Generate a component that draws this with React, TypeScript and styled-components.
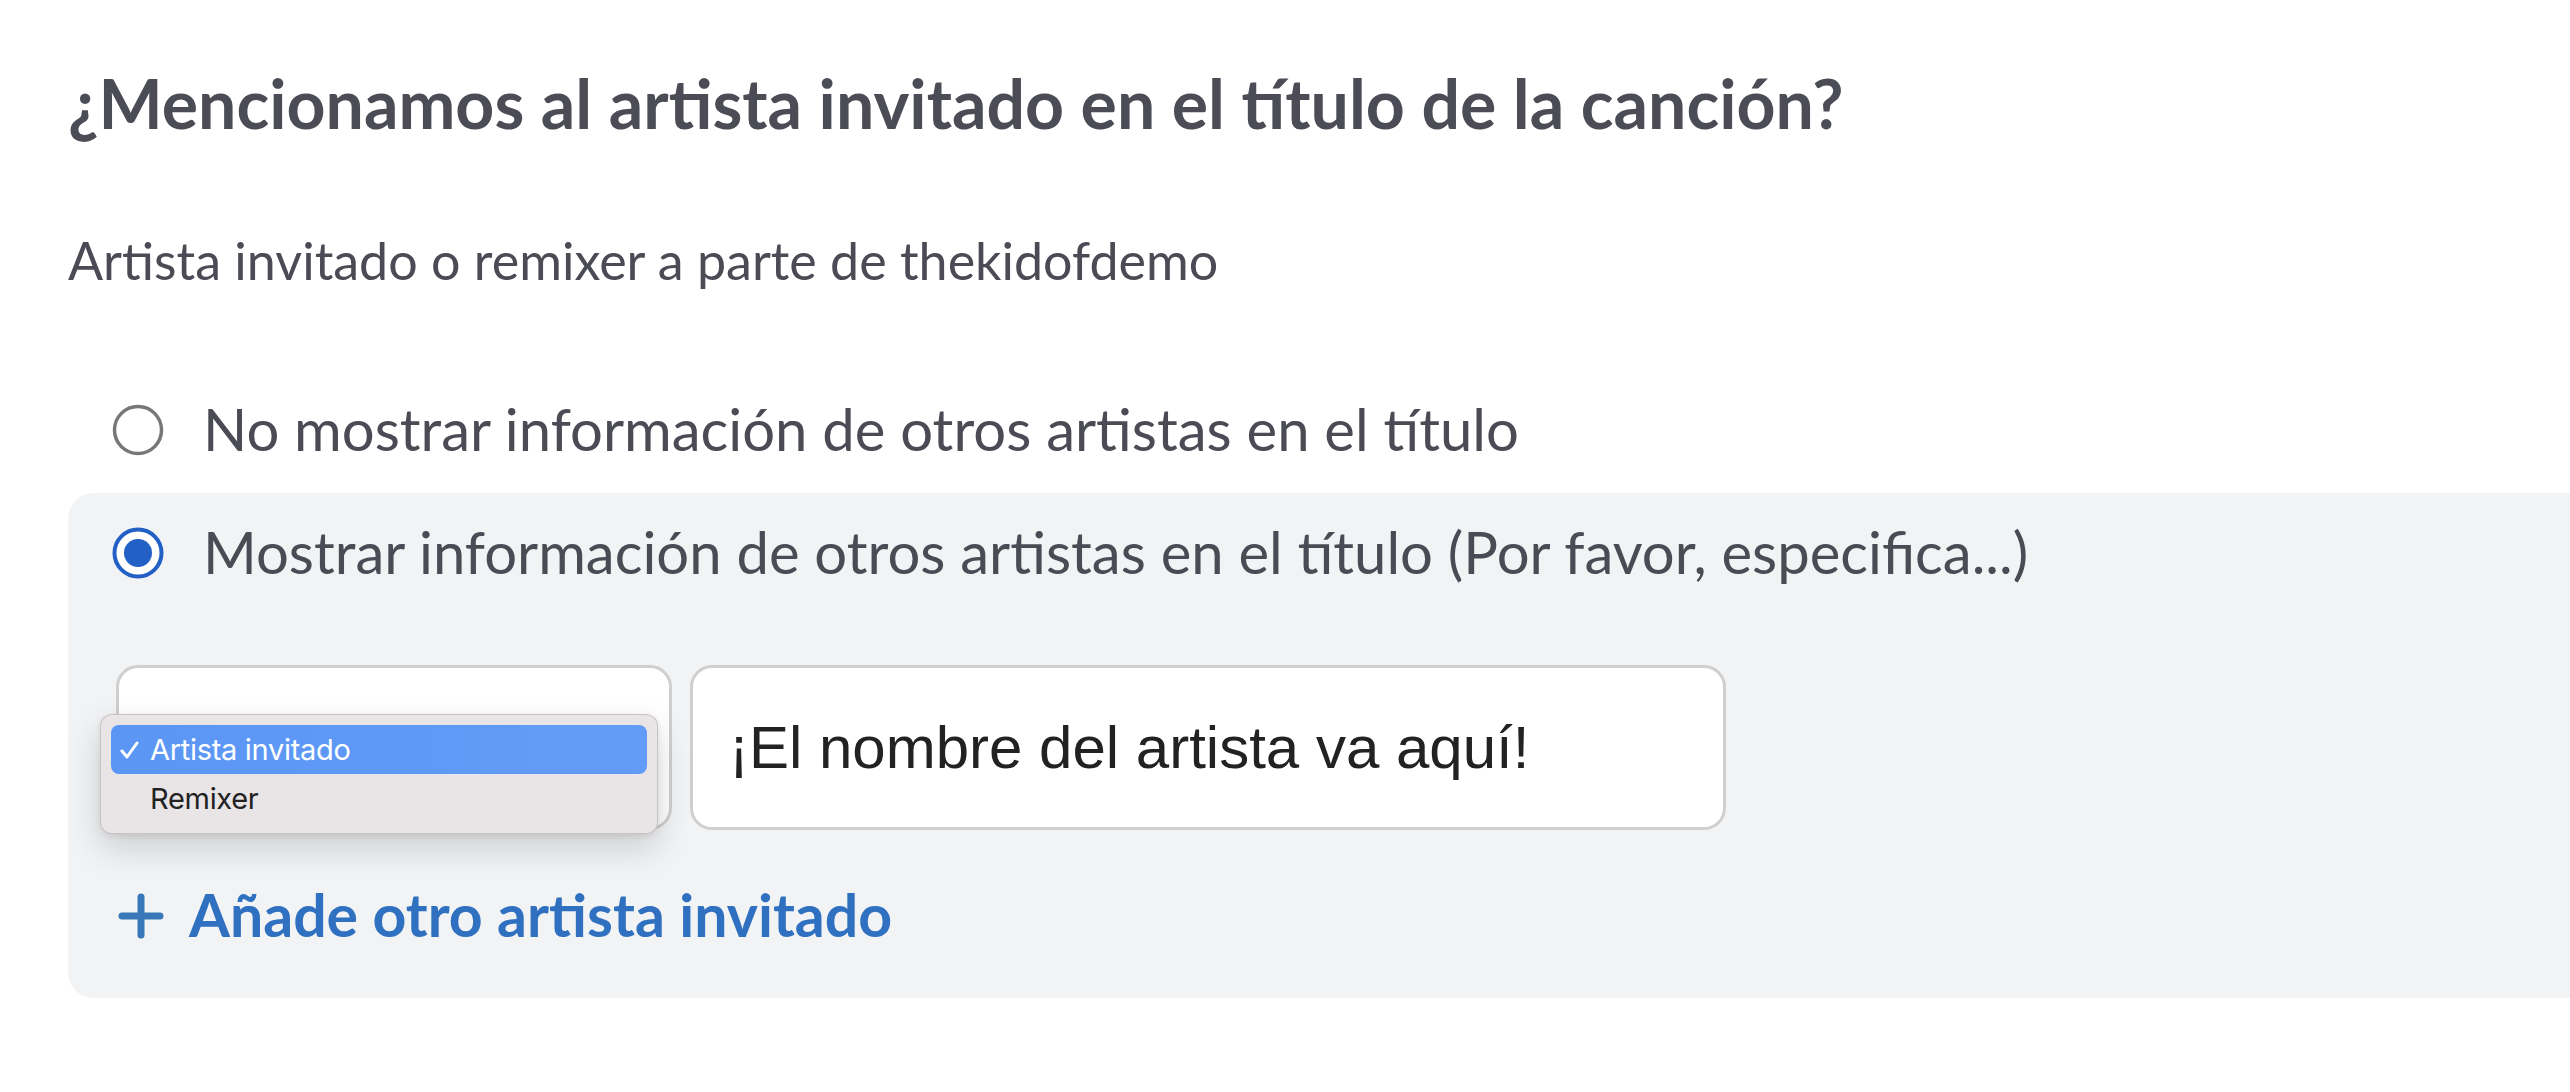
import styled, { createGlobalStyle } from "styled-components";

const GlobalStyle = createGlobalStyle`
  html, body {
    margin: 0;
    padding: 0;
    background: #ffffff;
    overflow: hidden;
  }
  body {
    font-family: "Lato", "Noto Sans", sans-serif;
    color: #4a4b54;
  }
`;

const Page = styled.div`
  width: 2570px;
  height: 1092px;
  padding: 62px 0 0 68px;
  box-sizing: border-box;
`;

const Title = styled.h1`
  margin: 0;
  font-size: 68px;
  font-weight: 700;
  line-height: 1.2;
  color: #4b4c55;
`;

const Subtitle = styled.p`
  margin: 85px 0 0;
  font-size: 52px;
  font-weight: 400;
  line-height: 1.2;
`;

const Option = styled.label<{ $top?: number }>`
  display: flex;
  align-items: center;
  gap: 39px;
  margin-top: ${(p) => p.$top ?? 0}px;
  padding-left: 44px;
  font-size: 58px;
  line-height: 1.2;
  white-space: nowrap;
  cursor: pointer;
`;

const RadioMark = styled.svg`
  flex: none;
  width: 52px;
  height: 52px;
  margin-top: 3px;
`;

const Panel = styled.section`
  margin: 29px -60px 0 0;
  padding: 24px 0 47px;
  background: #f2f3f5;
  border-radius: 26px;
`;

const Fields = styled.div`
  display: flex;
  gap: 18px;
  margin-top: 79px;
  padding-left: 48px;
`;

const Box = styled.div<{ $width: number }>`
  position: relative;
  width: ${(p) => p.$width}px;
  height: 165px;
  box-sizing: border-box;
  background: #ffffff;
  border: 3px solid #cfcfcf;
  border-radius: 22px;
`;

const NameInput = styled.input`
  width: 100%;
  height: 100%;
  box-sizing: border-box;
  padding: 0 0 0 36px;
  border: none;
  outline: none;
  background: transparent;
  font-family: "Liberation Sans", Arial, sans-serif;
  font-size: 60px;
  color: #222222;
  &::placeholder {
    color: #222222;
    opacity: 1;
  }
`;

const Menu = styled.ul`
  position: absolute;
  left: -19px;
  top: 46px;
  width: 558px;
  margin: 0;
  padding: 10px;
  box-sizing: border-box;
  list-style: none;
  background: #e9e4e6;
  border: 1px solid rgba(0, 0, 0, 0.14);
  border-radius: 12px;
  box-shadow: 0 14px 34px rgba(0, 0, 0, 0.16), 0 2px 6px rgba(0, 0, 0, 0.08);
  font-family: "Inter", "Liberation Sans", sans-serif;
  font-size: 29px;
  letter-spacing: -0.3px;
`;

const MenuItem = styled.li<{ $active?: boolean }>`
  display: flex;
  align-items: center;
  height: 49px;
  padding-left: 9px;
  border-radius: 8px;
  background: ${(p) => (p.$active ? "linear-gradient(90deg, #5b96f5, #639cf8)" : "transparent")};
  color: ${(p) => (p.$active ? "#ffffff" : "#222222")};
`;

const CheckSlot = styled.span`
  display: flex;
  width: 30px;
  flex: none;
`;

const AddLink = styled.a`
  display: flex;
  align-items: center;
  gap: 25px;
  margin-top: 50px;
  padding-left: 50px;
  font-size: 59px;
  font-weight: 700;
  line-height: 1.2;
  color: #2f70c1;
  text-decoration: none;
  cursor: pointer;
`;

function Radio({ checked }: { checked?: boolean }) {
  return (
    <RadioMark viewBox="0 0 52 52">
      {checked ? (
        <>
          <circle cx="26" cy="26" r="23.5" fill="#fff" stroke="#2360c6" strokeWidth="4" />
          <circle cx="26" cy="26" r="14" fill="#2360c6" />
        </>
      ) : (
        <circle cx="26" cy="26" r="23.5" fill="#fff" stroke="#777777" strokeWidth="3.5" />
      )}
    </RadioMark>
  );
}

const roles = [
  { label: "Artista invitado", active: true },
  { label: "Remixer", active: false },
];

function App() {
  return (
    <>
      <GlobalStyle />
      <Page>
        <Title>¿Mencionamos al artista invitado en el título de la canción?</Title>
        <Subtitle>Artista invitado o remixer a parte de thekidofdemo</Subtitle>

        <Option $top={103}>
          <Radio />
          No mostrar información de otros artistas en el título
        </Option>

        <Panel>
          <Option>
            <Radio checked />
            Mostrar información de otros artistas en el título (Por favor, especifica...)
          </Option>

          <Fields>
            <Box $width={556}>
              <Menu>
                {roles.map((role) => (
                  <MenuItem key={role.label} $active={role.active}>
                    <CheckSlot>
                      {role.active && (
                        <svg width="19" height="18" viewBox="0 0 19 18">
                          <path
                            d="M2 10 L7 16 L17 2"
                            fill="none"
                            stroke="#fff"
                            strokeWidth="3"
                            strokeLinecap="round"
                            strokeLinejoin="round"
                          />
                        </svg>
                      )}
                    </CheckSlot>
                    {role.label}
                  </MenuItem>
                ))}
              </Menu>
            </Box>
            <Box $width={1036}>
              <NameInput placeholder="¡El nombre del artista va aquí!" />
            </Box>
          </Fields>

          <AddLink>
            <svg width="46" height="46" viewBox="0 0 46 46">
              <path
                d="M23 4 V42 M4 23 H42"
                stroke="#3978b8"
                strokeWidth="7"
                strokeLinecap="round"
              />
            </svg>
            Añade otro artista invitado
          </AddLink>
        </Panel>
      </Page>
    </>
  );
}

export default App;
